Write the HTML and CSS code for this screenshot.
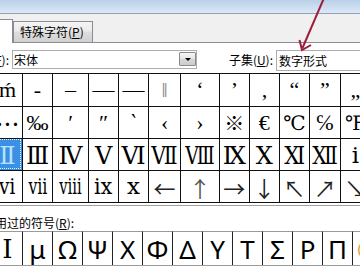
FILE: index.html
```html
<!DOCTYPE html>
<html>
<head>
<meta charset="utf-8">
<title>符号</title>
<link rel="stylesheet" href="styles.css">
</head>
<body>

<div class="dialog">
   <div class="caption"></div>

   <div class="tabs">
      <div class="tab current">符号(<u>S</u>)</div>
      <div class="tab">特殊字符(<u>P</u>)</div>
   </div>

   <div class="page">
      <div class="font-row">
         <label class="lbl font-lbl">字体(<u>F</u>):</label>
         <div class="combo font-combo">宋体<span class="drop"><span class="tri"></span></span></div>
         <label class="lbl subset-lbl">子集(<u>U</u>):</label>
         <div class="combo subset-combo">数字形式</div>
      </div>

      <div class="grid-frame">
         <table class="chars">
            <tr class="first">
               <td>ḿ</td><td>‐</td><td>–</td><td>—</td><td>―</td><td class="grey">‖</td>
               <td>‘</td><td>’</td><td>‚</td><td>“</td><td>”</td><td>„</td><td>‟</td><td>†</td><td>‡</td>
            </tr>
            <tr>
               <td class="cjk">…</td><td>‰</td><td>′</td><td>″</td><td>‵</td><td>‹</td>
               <td>›</td><td class="cjk mark">※</td><td>€</td><td class="dv">℃</td><td>℅</td><td class="dv">℉</td><td>№</td><td>℡</td><td>™</td>
            </tr>
            <tr class="roman">
               <td class="sel">Ⅱ</td><td>Ⅲ</td><td>Ⅳ</td><td>Ⅴ</td><td>Ⅵ</td><td><span class="n85">Ⅶ</span></td>
               <td><span class="n78">Ⅷ</span></td><td>Ⅸ</td><td>Ⅹ</td><td><span class="n90">Ⅺ</span></td><td><span class="n85">Ⅻ</span></td>
               <td class="lo">ⅰ</td><td class="lo">ⅱ</td><td>ⅲ</td><td>ⅳ</td>
            </tr>
            <tr>
               <td class="small"><span class="n80">ⅵ</span></td><td class="small"><span class="n68">ⅶ</span></td>
               <td class="small"><span class="n64">ⅷ</span></td><td class="small"><span class="n90">ⅸ</span></td>
               <td class="small">ⅹ</td>
               <td class="ar">←</td><td class="ar up">↑</td><td class="ar">→</td><td class="ar">↓</td>
               <td class="ar">↖</td><td class="ar">↗</td><td class="ar">↘</td><td class="ar">↙</td><td class="ar">↨</td><td>∂</td>
            </tr>
         </table>
      </div>

      <div class="recent-lbl">近期使用过的符号(<u>R</u>):</div>
      <table class="chars recent">
         <tr>
            <td class="one">Ⅰ</td><td>μ</td><td>Ω</td><td>Ψ</td><td>Χ</td><td>Φ</td>
            <td>Δ</td><td>Υ</td><td>Τ</td><td>Σ</td><td>Ρ</td><td>Π</td><td class="last">©</td><td>Θ</td><td>Ξ</td>
         </tr>
      </table>
   </div>
</div>

<svg class="pointer" width="360" height="60" viewBox="0 0 360 60">
   <line x1="324" y1="-2" x2="302.5" y2="48" stroke="#9c1d3b" stroke-width="2"/>
   <polyline points="299.5,40 302,50 311,45" fill="none" stroke="#9c1d3b" stroke-width="2"/>
</svg>

</body>
</html>
```

FILE: styles.css
```css
body {
   margin: 0;
   width: 360px;
   height: 270px;
   overflow: hidden;
   position: relative;
   background: #fff;
   color: #000;
   font-family: "Noto Sans CJK SC", sans-serif;
   font-size: 12px;
}

.dialog {
   margin-left: -50px;
   width: 560px;
}

.caption {
   height: 13px;
   border-bottom: 1px solid #8fa2b9;
   background: linear-gradient(#b9d0ea, #dce8f5);
}

/* tab strip */
.tabs {
   display: flex;
   align-items: flex-end;
   height: 28px;
   padding-left: 4px;
   background: #f0f0f0;
}

.tab {
   box-sizing: border-box;
   width: 80px;
   height: 21px;
   padding: 2px 0 0 6px;
   border: 1px solid #898c95;
   border-bottom: none;
   background: linear-gradient(#f4f4f4, #ebebeb 45%, #dedede 50%, #d0d0d0);
   line-height: 16px;
   white-space: nowrap;
}

.tab.current {
   position: relative;
   width: 59px;
   height: 24px;
   margin-bottom: -1px;
   padding: 4px 12px 0 0;
   text-align: right;
   background: #fff;
}

.page {
   border-top: 1px solid #898c95;
   padding-top: 7px;
   background: #fff;
}

/* font / subset row */
.font-row {
   display: flex;
   align-items: flex-start;
   height: 21px;
}

.lbl {
   line-height: 19px;
   white-space: nowrap;
}

.font-lbl {
   width: 53px;
   margin-left: 6px;
   padding-right: 3px;
   text-align: right;
}

.subset-lbl {
   margin-left: 28px;
   width: 48px;
   padding-right: 3px;
   text-align: right;
}

.combo {
   box-sizing: border-box;
   height: 19px;
   padding-left: 1px;
   border: 1px solid #abadb3;
   line-height: 17px;
   background: #fff;
   white-space: nowrap;
}

.font-combo {
   display: flex;
   width: 185px;
}

.subset-combo {
   width: 160px;
   height: 21px;
   padding-left: 2px;
   line-height: 19px;
}

.drop {
   box-sizing: border-box;
   display: flex;
   align-items: center;
   justify-content: center;
   width: 17px;
   height: 14px;
   margin: 1px 0 0 auto;
   border: 1px solid #8a8a8a;
   border-radius: 1px;
   background: linear-gradient(#f6f6f6, #e4e4e4 50%, #d6d6d6 51%, #cdcdcd);
}

.tri {
   width: 0;
   height: 0;
   border-left: 3px solid transparent;
   border-right: 3px solid transparent;
   border-top: 3px solid #000;
}

/* character grid */
.grid-frame {
   margin-top: 2px;
   padding-bottom: 2px;
   border-bottom: 1px solid #a0a0a0;
}

.chars {
   table-layout: fixed;
   border-collapse: separate;
   border-spacing: 0;
   margin-left: 42px;
   border-bottom: 1px solid #111;
}

.chars td {
   box-sizing: border-box;
   width: 30px;
   height: 32px;
   padding: 0;
   border-left: 1px solid #111;
   border-top: 1px solid #111;
   text-align: center;
   vertical-align: middle;
   font-family: "Liberation Serif", "DejaVu Serif", serif;
   font-size: 22px;
   line-height: 1;
   white-space: nowrap;
   overflow: hidden;
}

.chars tr.first td {
   height: 33px;
}

.chars td.grey {
   color: #888;
}

.chars td.cjk {
   font-family: "Noto Sans CJK SC", sans-serif;
   font-size: 24px;
}

.chars td.mark {
   font-size: 20px;
}

.chars td.dv {
   font-family: "DejaVu Serif", serif;
   font-size: 20px;
}

.chars .roman td {
   font-family: "DejaVu Serif", serif;
   font-size: 24px;
   padding-top: 2px;
}

.chars .roman td.lo {
   font-size: 23px;
}

.chars td.sel {
   background: #3b8fe4;
   color: #b8e2ff;
   outline: 1px dotted #dff;
   outline-offset: -2px;
}

.chars td.small {
   font-family: "DejaVu Serif", serif;
   font-size: 23px;
}

.chars td span {
   display: inline-block;
}

.n90 { transform: scaleX(.9); }
.n85 { transform: scaleX(.85); }
.n80 { transform: scaleX(.8); }
.n78 { transform: scaleX(.78); }
.n68 { transform: scaleX(.68); }
.n64 { transform: scaleX(.64); }

.chars td.ar {
   font-family: "Noto Sans CJK SC", sans-serif;
   font-size: 22px;
   color: #222;
}

.chars td.up {
   color: #555;
}

/* recently used */
.recent-lbl {
   margin: 9px 0 0 9px;
   line-height: 16px;
   white-space: nowrap;
}

.recent {
   border-bottom-color: #9a9a9a;
}

.recent td {
   height: 34px;
   border-top-color: #9a9a9a;
   border-left-color: #222;
   font-family: "Noto Sans", sans-serif;
   font-size: 26px;
}

.recent td.one {
   font-family: "DejaVu Serif", serif;
}

.recent td.last {
   color: #e0a040;
}

.pointer {
   position: absolute;
   top: 0;
   left: 0;
   pointer-events: none;
}
```
